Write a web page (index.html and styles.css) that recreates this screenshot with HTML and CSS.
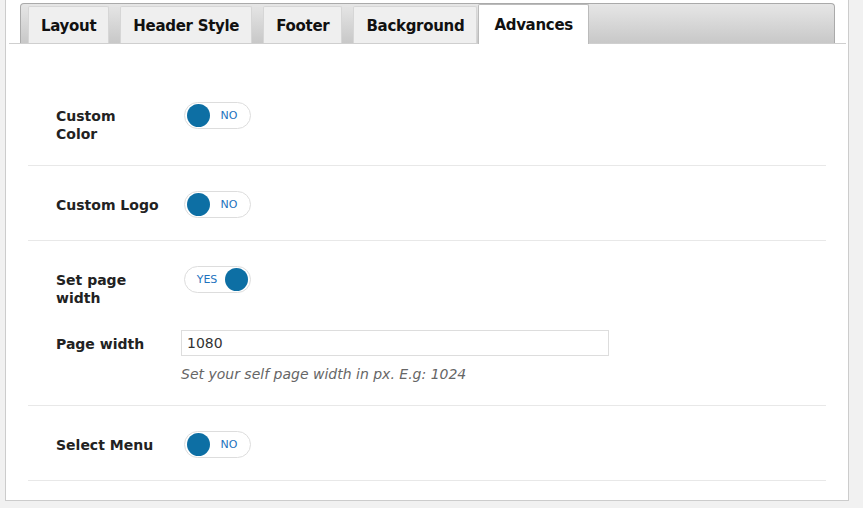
FILE: index.html
```html
<!DOCTYPE html>
<html lang="en">
<head>
  <meta charset="UTF-8" />
  <title>Theme Options</title>
  <link rel="stylesheet" href="styles.css">
</head>
<body>
  <div class="panel">
    <div class="tabs-wrap">
      <ul class="tabs">
        <li class="tab">Layout</li>
        <li class="tab">Header Style</li>
        <li class="tab">Footer</li>
        <li class="tab">Background</li>
        <li class="tab active">Advances</li>
      </ul>
    </div>

    <div class="options">
      <div class="option-row">
        <div class="field">
          <label class="field-label">Custom Color</label>
          <span class="toggle"><span class="knob"></span><span class="toggle-text">NO</span></span>
        </div>
      </div>

      <div class="option-row">
        <div class="field">
          <label class="field-label">Custom Logo</label>
          <span class="toggle"><span class="knob"></span><span class="toggle-text">NO</span></span>
        </div>
      </div>

      <div class="option-row">
        <div class="field">
          <label class="field-label">Set page width</label>
          <span class="toggle on"><span class="toggle-text">YES</span><span class="knob"></span></span>
        </div>
        <div class="field field-input">
          <label class="field-label" for="pageWidth">Page width</label>
          <div class="control">
            <input type="text" id="pageWidth" value="1080" />
            <p class="help">Set your self page width in px. E.g: 1024</p>
          </div>
        </div>
      </div>

      <div class="option-row">
        <div class="field">
          <label class="field-label">Select Menu</label>
          <span class="toggle"><span class="knob"></span><span class="toggle-text">NO</span></span>
        </div>
      </div>
    </div>
  </div>
</body>
</html>
```

FILE: styles.css
```css
body {
  margin: 0;
  background-color: #f1f1f1;
  font-family: "DejaVu Sans", Verdana, sans-serif;
  color: #222;
}

.panel {
  width: 842px;
  height: 500px;
  margin-left: 5px;
  background: #fff;
  border: 1px solid #ccc;
  border-top: none;
}

/* tab strip */
.tabs-wrap {
  margin: 0 2px 0 3px;
  padding: 3px 11px 0 11px;
  border-bottom: 1px solid #cfcfcf;
}

.tabs {
  display: flex;
  align-items: flex-end;
  gap: 11px;
  list-style: none;
  margin: 0;
  padding: 0 0 0 7px;
  height: 39px;
  border: 1px solid #aaa;
  border-bottom: none;
  border-radius: 4px 4px 0 0;
  background: linear-gradient(#e6e6e6, #c8c8c8);
}

.tab {
  height: 36px;
  line-height: 38px;
  padding: 0 12px;
  font-size: 15px;
  font-weight: bold;
  letter-spacing: -0.3px;
  color: #111;
  background: #efefef;
  border: 1px solid #d6d6d6;
  border-bottom: none;
  border-radius: 2px 2px 0 0;
  cursor: pointer;
}

.tab.active {
  position: relative;
  height: 39px;
  line-height: 40px;
  padding: 0 15px;
  margin-bottom: -1px;
  margin-left: -10px;
  background: #fff;
  border-color: #bbb;
}

/* options */
.options {
  padding: 33px 22px 0 22px;
}

.option-row {
  padding: 25px 28px 22px;
  border-bottom: 1px solid #e8e8e8;
}

.field {
  display: flex;
  align-items: flex-start;
}

.field + .field {
  margin-top: 23px;
}

.field-label {
  width: 104px;
  margin: 5px 21px 0 0;
  font-size: 14px;
  font-weight: bold;
  line-height: 18px;
}

/* switch */
.toggle {
  display: flex;
  align-items: center;
  box-sizing: border-box;
  width: 67px;
  height: 27px;
  margin-left: 3px;
  padding: 0 2px;
  border: 1px solid #ddd;
  border-radius: 14px;
  background: #fff;
}

.knob {
  width: 23px;
  height: 23px;
  border-radius: 50%;
  background: #0d6fa4;
}

.toggle-text {
  flex: 1;
  text-align: center;
  font-size: 11px;
  color: #1e73be;
}

.toggle.on .toggle-text {
  padding-left: 2px;
}

/* text input */
.control input {
  box-sizing: border-box;
  width: 428px;
  height: 26px;
  padding: 0 5px;
  border: 1px solid #ddd;
  font-family: "DejaVu Sans", Verdana, sans-serif;
  font-size: 14px;
  color: #333;
}

.help {
  margin: 9px 0 0;
  font-size: 14px;
  line-height: 18px;
  font-style: italic;
  color: #666;
}
```
